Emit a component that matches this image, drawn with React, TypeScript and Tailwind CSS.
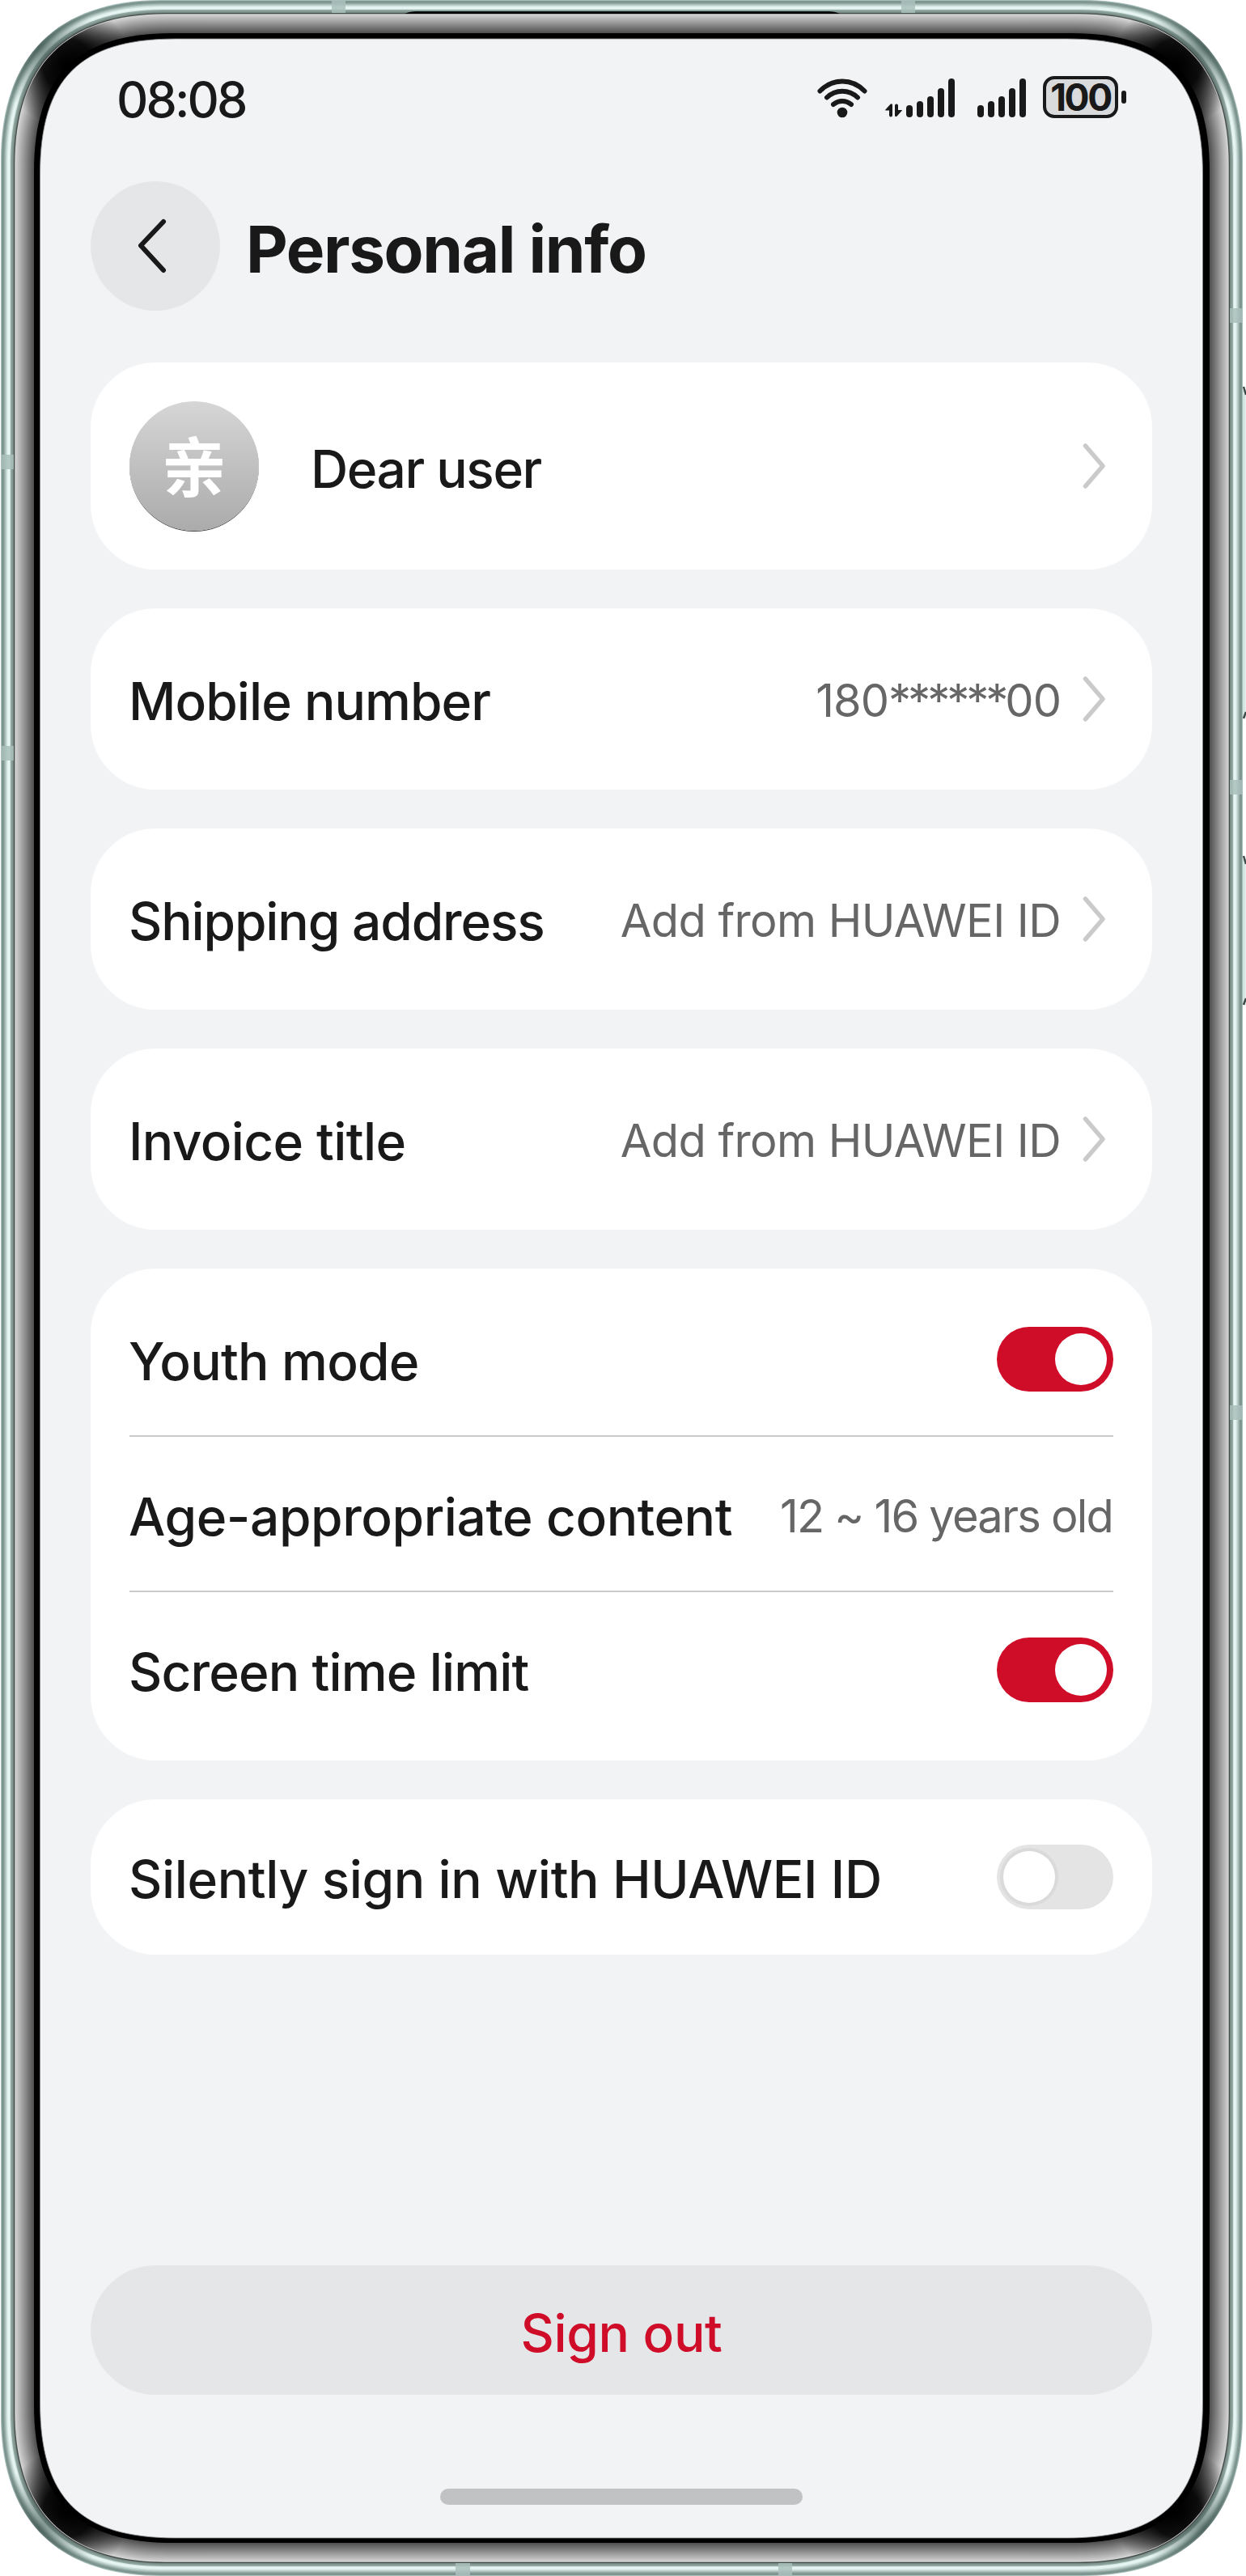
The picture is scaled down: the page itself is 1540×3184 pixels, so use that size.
import React from "react";

const DEVICE = { x0: 1, y0: 0, x1: 1537, y1: 3183 };

function squircle(x0: number, y0: number, x1: number, y1: number, l: number, c: number) {
  return [
    `M${x0} ${y0 + l}`,
    `C${x0} ${y0 + c} ${x0 + c} ${y0} ${x0 + l} ${y0}`,
    `H${x1 - l}`,
    `C${x1 - c} ${y0} ${x1} ${y0 + c} ${x1} ${y0 + l}`,
    `V${y1 - l}`,
    `C${x1} ${y1 - c} ${x1 - c} ${y1} ${x1 - l} ${y1}`,
    `H${x0 + l}`,
    `C${x0 + c} ${y1} ${x0} ${y1 - c} ${x0} ${y1 - l}Z`,
  ].join("");
}

// Ring at a given depth from the outer edge; corners tighten towards the screen.
function ring(d: number) {
  const t = d / 49;
  const l = 198 - 33 * t;
  const c = 70 - 20 * t;
  return squircle(DEVICE.x0 + d, DEVICE.y0 + d, DEVICE.x1 - d - 1, DEVICE.y1 - d + 1, l, c);
}

const METAL = [
  "#a9bdb9", "#7f9a94", "#7d918c", "#859b96", "#94aba6", "#a9beba", "#bdd0cc", "#d0e1dd",
  "#dff0ec", "#e8f6f3", "#e6f4f1", "#d6e7e3", "#93a9a4", "#8aa09b", "#82968f", "#76887f",
];

const GLASS = Array.from({ length: 25 }, (_, i) => {
  const v = Math.round(212 - (i / 24) * 138);
  return `rgb(${v},${v},${v})`;
});

const CORNERS = [
  [84, 80],
  [1453, 80],
  [84, 3104],
  [1453, 3104],
];

function DeviceFrame() {
  return (
    <svg className="absolute inset-0" width="1540" height="3184" viewBox="0 0 1540 3184" aria-hidden="true">
      <defs>
        <radialGradient id="shade">
          <stop offset="0" stopColor="#000" />
          <stop offset="0.4" stopColor="#000" stopOpacity="0.92" />
          <stop offset="1" stopColor="#000" stopOpacity="0" />
        </radialGradient>
        <radialGradient id="metalShade">
          <stop offset="0" stopColor="#2f4641" stopOpacity="0.6" />
          <stop offset="1" stopColor="#2f4641" stopOpacity="0" />
        </radialGradient>
        <clipPath id="glassClip">
          <path d={ring(18)} />
        </clipPath>
        <clipPath id="metalClip">
          <path d={ring(0)} />
        </clipPath>
      </defs>
      {[
        [482, 888],
        [1062, 1242],
      ].map(([a, b]) => (
        <g key={a}>
          <rect x="1536" y={a} width="3.5" height={b - a} fill="#d3e6e1" />
          <path d={`M1537 ${a - 4}L1540 ${a + 6}M1537 ${b}L1540 ${b - 8}`} stroke="#3d4a48" strokeWidth="2.500" />
        </g>
      ))}
      {METAL.map((c, i) => (
        <path key={i} d={ring(i)} fill={c} />
      ))}
      <g clipPath="url(#metalClip)">
        {[
          [48, 58],
          [1489, 58],
          [48, 3126],
          [1489, 3126],
        ].map(([x, y]) => (
          <circle key={`${x}-${y}`} cx={x} cy={y} r="75" fill="url(#metalShade)" />
        ))}
        <g fill="#a9c0bb" fillOpacity="0.85">
          <rect x="1" y="562" width="16" height="18" />
          <rect x="1" y="922" width="16" height="18" />
          <rect x="1520" y="381" width="16" height="18" />
          <rect x="1520" y="964" width="16" height="18" />
          <rect x="1520" y="1737" width="16" height="18" />
          <rect x="410" y="0" width="17" height="17" />
          <rect x="1114" y="0" width="17" height="17" />
          <rect x="563" y="3168" width="18" height="16" />
          <rect x="962" y="3168" width="17" height="16" />
        </g>
      </g>
      <path d={ring(16)} fill="#454d4c" />
      {GLASS.map((c, i) => (
        <path key={i} d={ring(17.3 + i)} fill={c} />
      ))}
      <g clipPath="url(#glassClip)">
        {CORNERS.map(([x, y]) => (
          <circle key={`${x}-${y}`} cx={x} cy={y} r="78" fill="url(#shade)" />
        ))}
      </g>
      <path d={ring(41)} fill="#000" />
      <path d="M500 17Q506 14 514 14H1024Q1032 14 1038 17Z" fill="#050606" />
      <path d={squircle(49.5, 48, 1486.5, 3137, 168, 49)} fill="#f1f3f5" stroke="#8c8d8e" strokeWidth="0.8" />
    </svg>
  );
}

function WifiIcon() {
  return (
    <svg className="mt-[3px]" width="62" height="50" viewBox="0 0 62 50" fill="none" stroke="#191919" strokeWidth="6" strokeLinecap="round" aria-hidden="true">
      <path d="M3.500 15.500C19 -0.500 43 -0.500 58.500 15.500M12 23.500C22.500 13 39.500 13 50 23.500M20 32C26.500 26.500 35.500 26.500 42 32" />
      <circle cx="31" cy="42" r="6.300" fill="#191919" stroke="none" />
    </svg>
  );
}

const BARS = [15, 20, 26, 36, 48];

function SignalIcon({ data = false }: { data?: boolean }) {
  return (
    <div className="flex items-end pt-0.5">
      {data && (
        <svg className="mr-[5px]" width="21" height="17" viewBox="0 0 21 17" fill="#191919" aria-hidden="true">
          <path d="M0 8L6.500 .8Q9 -.5 9 2V14.500Q9 16.500 7 16.500Q5 16.500 5 14.500V8.500H.5Z" />
          <path d="M21 8.500L14.500 15.700Q12 17 12 14.500V2.500Q12 .5 14 .5Q16 .5 16 2.500V8H20.500Z" />
        </svg>
      )}
      <div className="flex items-end gap-[5px]">
        {BARS.map((h) => (
          <span key={h} className="w-2 rounded-full bg-[#191919]" style={{ height: h }} />
        ))}
      </div>
    </div>
  );
}

function Battery() {
  return (
    <div className="flex items-center gap-1">
      <div className="flex h-[52px] w-[93px] items-center justify-center rounded-[14px] border-4 border-[#191919] bg-[#d9dadc]">
        <span className="text-[46px] leading-none font-bold tracking-[-2.400px] text-[#191919]">100</span>
      </div>
      <span className="h-4 w-1.5 rounded-full bg-[#191919]" />
    </div>
  );
}

function StatusBar() {
  return (
    <div className="mt-[46px] flex h-[52px] items-center justify-between pr-8 pl-8">
      <span className="pt-1.5 text-[61px] leading-none font-[450] tracking-[-2.900px]">08:08</span>
      <div className="flex items-center">
        <WifiIcon />
        <div className="ml-[22px]">
          <SignalIcon data />
        </div>
        <div className="ml-7">
          <SignalIcon />
        </div>
        <div className="ml-[21px]">
          <Battery />
        </div>
      </div>
    </div>
  );
}

function Chevron() {
  return (
    <svg className="mr-2.5 ml-[27px] shrink-0" width="28" height="58" viewBox="0 0 28 58" fill="none" stroke="#cacaca" strokeWidth="5.500" strokeLinecap="round" strokeLinejoin="round" aria-hidden="true">
      <path d="M3.500 4L25 29L3.500 54" />
    </svg>
  );
}

function Toggle({ on = false }: { on?: boolean }) {
  return on ? (
    <div className="flex h-20 w-36 justify-end rounded-full bg-[#cf0d29] p-2">
      <span className="size-16 rounded-full bg-white" />
    </div>
  ) : (
    <div className="flex h-20 w-36 rounded-full bg-[#e4e4e4] p-2">
      <span className="size-16 rounded-full bg-white ring-4 ring-[#dadada]" />
    </div>
  );
}

const CARD = "rounded-[80px] bg-white px-12";
const LABEL = "text-[64px] leading-[80px] font-[470] whitespace-nowrap";
const VALUE = "text-[56px] leading-[72px] whitespace-nowrap text-[#666666]";

function LinkCard({ label, track, children }: { label: string; track: string; children: React.ReactNode }) {
  return (
    <div className={`${CARD} mt-12 flex h-56 items-center`}>
      <span className={`${LABEL} ${track} -ml-px pt-1.5`}>{label}</span>
      <span className={`${VALUE} ml-auto pt-1 tracking-[-0.600px]`}>{children}</span>
      <Chevron />
    </div>
  );
}

export default function App() {
  return (
    <div className="relative h-[3184px] w-[1540px] overflow-hidden bg-white font-['Inter','Noto_Sans_CJK_SC',sans-serif] text-[#191919]">
      <DeviceFrame />
      <div className="relative flex h-full flex-col pt-12 pr-[116px] pb-[88px] pl-28">
        <StatusBar />
        <header className="mt-[78px] flex h-40 items-center">
          <button className="flex size-40 items-center justify-center rounded-full bg-[#e5e6e8]">
            <svg className="mr-2" width="36" height="68" viewBox="0 0 36 68" fill="none" stroke="#191919" strokeWidth="6" strokeLinecap="round" strokeLinejoin="round" aria-hidden="true">
              <path d="M32 4L4 33.500L32 64" />
            </svg>
          </button>
          <h1 className="pt-2 pl-8 text-[80px] leading-none font-bold tracking-[-1.400px] whitespace-nowrap">Personal info</h1>
        </header>

        <div className={`${CARD} mt-16 flex h-64 items-center`}>
          <div className="flex size-40 items-center justify-center rounded-full bg-linear-to-b from-[#d6d6d6] to-[#ababab] shadow-[0_1px_0_#444]">
            <span className="pt-1 text-[80px] leading-none font-bold text-white">亲</span>
          </div>
          <span className={`${LABEL} ml-16 pt-2 tracking-[-1.450px]`}>Dear user</span>
          <div className="ml-auto">
            <Chevron />
          </div>
        </div>

        <LinkCard label="Mobile number" track="tracking-[-0.950px]">
          <span className="tracking-[-1px]">180</span>
          <span className="tracking-[-4px]">******</span>
          <span className="tracking-[-1px]">00</span>
        </LinkCard>
        <LinkCard label="Shipping address" track="tracking-[-1.150px]">Add from HUAWEI ID</LinkCard>
        <LinkCard label="Invoice title" track="tracking-[-0.600px]">Add from HUAWEI ID</LinkCard>

        <div className={`${CARD} mt-12 h-[608px] pt-4`}>
          <div className="flex h-48 items-center justify-between border-b-2 border-[#cacaca] pt-0.5">
            <span className={`${LABEL} -ml-px pt-1.5 tracking-[-0.750px]`}>Youth mode</span>
            <Toggle on />
          </div>
          <div className="flex h-48 items-center justify-between border-b-2 border-[#cacaca] pt-0.5">
            <span className={`${LABEL} -ml-px pt-1.5 tracking-[-0.430px]`}>Age-appropriate content</span>
            <span className={`${VALUE} pt-1 pr-px tracking-[-1.800px]`}>12 ~ 16 years old</span>
          </div>
          <div className="flex h-48 items-center justify-between">
            <span className={`${LABEL} -ml-px pt-1.5 tracking-[-0.850px]`}>Screen time limit</span>
            <Toggle on />
          </div>
        </div>

        <div className={`${CARD} mt-12 flex h-48 items-center justify-between`}>
          <span className={`${LABEL} -ml-px pt-1.5 tracking-[-0.370px]`}>Silently sign in with HUAWEI ID</span>
          <Toggle />
        </div>

        <button className="mt-auto flex h-40 items-center justify-center rounded-full bg-[#e5e6e8]">
          <span className={`${LABEL} pt-2 tracking-[-0.300px] text-[#cf0d29]`}>Sign out</span>
        </button>
        <div className="mt-[116px] h-5 w-[448px] self-center rounded-full bg-[#c1c2c4]" />
      </div>
    </div>
  );
}
